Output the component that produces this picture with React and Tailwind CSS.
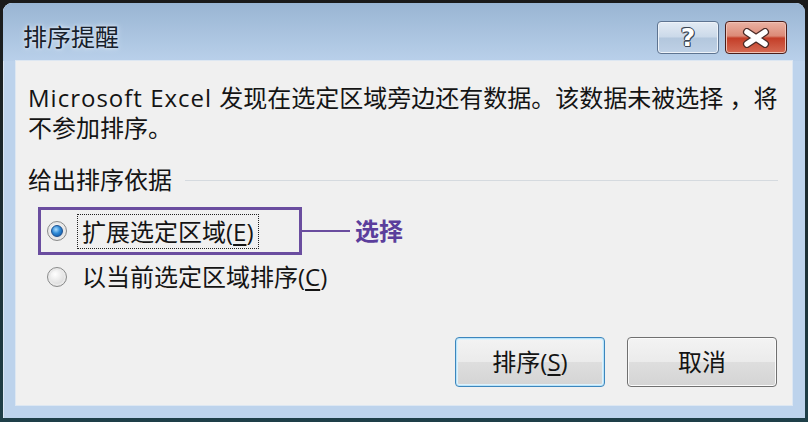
import React from "react";

const cjk = { fontFamily: '"Open Sans", "Noto Sans CJK SC", sans-serif' };

function Radio({ checked }) {
  return (
    <span className="relative flex h-[20px] w-[20px] shrink-0 items-center justify-center rounded-full border border-[#8a8b8b] bg-[radial-gradient(circle_at_40%_35%,#ffffff_0%,#e3e3e3_55%,#c4c4c4_100%)] shadow-[inset_0_0_0_2px_#e9e9e9]">
      {checked && (
        <span className="h-[12px] w-[12px] rounded-full border border-[#1c4f8f] bg-[radial-gradient(circle_at_40%_35%,#a9dcff_0%,#2f8ad6_45%,#0b4c97_100%)]" />
      )}
    </span>
  );
}

export default function App() {
  return (
    <div
      className="h-[422px] w-[808px] overflow-hidden bg-[linear-gradient(#1a1a1a,#1e3f48)] pb-[4px] pl-[3px] pr-[3px] pt-[3px]"
      style={cjk}
    >
      <div className="flex h-[415px] w-[802px] flex-col rounded-t-[9px] bg-[#bdd3ec] shadow-[inset_1px_1px_0_#dbe7f4]">
        {/* title bar */}
        <div className="flex h-[58px] shrink-0 items-start justify-between rounded-t-[9px] bg-[linear-gradient(#99b5d3,#b9d0ea)] pl-[20px] pr-[18px]">
          <div className="mt-[19px] text-[24px] leading-[30px] text-[#17202b] [text-shadow:0_0_6px_#dbe8f5,0_0_3px_#e6eef8]">
            排序提醒
          </div>
          <div className="mt-[18px] flex gap-[6px]">
            <div className="flex h-[33px] w-[62px] items-center justify-center rounded-[4px] border border-[#5e7491] bg-[linear-gradient(#e3ebf4_0%,#cbd9e9_48%,#b3c7dd_52%,#bfd1e6_100%)] shadow-[inset_0_0_0_1px_#eef3f9]">
              <span
                className="text-[25px] font-bold leading-none text-white [text-shadow:1px_0_0_#3b4654,-1px_0_0_#3b4654,0_1px_0_#3b4654,0_-1px_0_#3b4654,1px_1px_0_#3b4654,-1px_-1px_0_#3b4654]"
                style={{ fontFamily: '"DejaVu Sans", sans-serif' }}
              >
                ?
              </span>
            </div>
            <div className="flex h-[33px] w-[62px] items-center justify-center rounded-[4px] border border-[#4b1e1a] bg-[linear-gradient(#eab2a3_0%,#dc8a77_45%,#c43e28_52%,#d56b55_100%)] shadow-[inset_0_0_0_1px_#f0c2b6]">
              <svg width="28" height="20" viewBox="0 0 28 20">
                <path d="M5 4 L23 16 M23 4 L5 16" stroke="#4a2a26" strokeWidth="8" strokeLinecap="round" />
                <path d="M5 4 L23 16 M23 4 L5 16" stroke="#ffffff" strokeWidth="5.5" strokeLinecap="round" />
              </svg>
            </div>
          </div>
        </div>

        {/* content */}
        <div className="mx-[13px] flex flex-1 flex-col bg-[#f0f0f0] pl-[12px] pr-[14px] pt-[22px] text-[24px] leading-[30px] text-[#141414] shadow-[0_0_0_1px_#dde7f2]">
          <p className="whitespace-nowrap">
            <span className="tracking-[1px]">Microsoft Excel </span>发现在选定区域旁边还有数据。该数据未被选择 ，将
          </p>
          <p>不参加排序。</p>

          <div className="mt-[22px] flex items-center">
            <span>给出排序依据</span>
            <span className="ml-[13px] h-px flex-1 bg-[#d5dadf]" />
          </div>

          <div className="ml-[10px] mt-[12px] flex flex-col">
            <div className="flex items-center">
              <div className="flex h-[48px] w-[264px] items-center border-[3px] border-[#6a4d9f] pl-[6px]">
                <Radio checked />
                <span className="ml-[10px] border border-dotted border-[#202020] px-[4px] leading-[33px]">
                  扩展选定区域(<span className="underline underline-offset-[3px]">E</span>)
                </span>
              </div>
              <span className="h-[2px] w-[48px] bg-[#6a4d9f]" />
              <span className="ml-[5px] font-bold text-[#5b3e9c]">选择</span>
            </div>
            <div className="mt-[2px] flex h-[40px] items-center pl-[9px]">
              <Radio />
              <span className="ml-[15px]">
                以当前选定区域排序(<span className="underline underline-offset-[3px]">C</span>)
              </span>
            </div>
          </div>

          <div className="mt-[40px] flex justify-end gap-[22px] pr-[1px]">
            <div className="flex h-[50px] w-[150px] items-center justify-center rounded-[4px] border border-[#3c86bd] bg-[linear-gradient(#f3f3f3_0%,#ebebeb_50%,#dedede_50%,#d4d4d4_100%)] shadow-[inset_0_0_0_1px_#b9e3f9,inset_0_0_0_2px_#dff2fc]">
              <span>
                排序(<span className="underline underline-offset-[3px]">S</span>)
              </span>
            </div>
            <div className="flex h-[50px] w-[150px] items-center justify-center rounded-[4px] border border-[#707070] bg-[linear-gradient(#f3f3f3_0%,#ebebeb_50%,#dedede_50%,#d4d4d4_100%)] shadow-[inset_0_0_0_1px_#fbfbfb]">
              <span>取消</span>
            </div>
          </div>
        </div>

        <div className="h-[13px] shrink-0" />
      </div>
    </div>
  );
}
